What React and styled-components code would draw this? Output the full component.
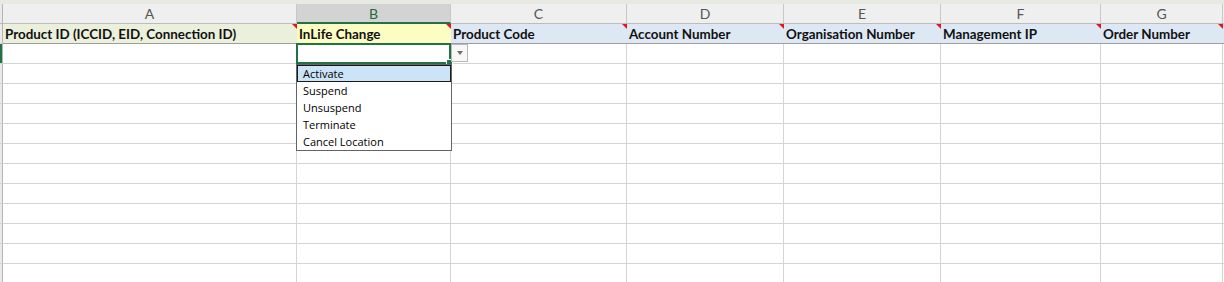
import React from 'react'
import styled, {createGlobalStyle, css} from 'styled-components'

const GlobalStyle = createGlobalStyle`
body {
	margin:0;
	background:#ffffff;
	font-family:Lato, "Liberation Sans", sans-serif;
}
`

const COLS = [
	{letter: 'A', width: 294, title: 'Product ID (ICCID, EID, Connection ID)', tone: 'green'},
	{letter: 'B', width: 154, title: 'InLife Change', tone: 'yellow', active: true},
	{letter: 'C', width: 176, title: 'Product Code', tone: 'blue'},
	{letter: 'D', width: 157, title: 'Account Number', tone: 'blue'},
	{letter: 'E', width: 157, title: 'Organisation Number', tone: 'blue'},
	{letter: 'F', width: 160, title: 'Management IP', tone: 'blue'},
	{letter: 'G', width: 122, title: 'Order Number', tone: 'blue'},
	{letter: '', width: 120, title: '', tone: 'blue'},
]

const TONES = {
	green: '#ebf0dd',
	yellow: '#fdfcc3',
	blue: '#dde8f4',
}

const OPTIONS = ['Activate', 'Suspend', 'Unsuspend', 'Terminate', 'Cancel Location']

const Sheet = styled.div`
position:relative;
width:1224px;
height:282px;
overflow:hidden;
background:#ffffff;
`

const TopStrip = styled.div`
height:4px;
background:#e7eae0;
`

const Row = styled.div`
display:flex;
height:20px;
`

const RowHead = styled.div`
width:2px;
flex:none;
background:${p => p.$active ? '#217346' : '#e9e9e9'};
border-right:1px solid #b5b5b5;
border-bottom:1px solid ${p => p.$head ? '#bcbcbc' : '#d4d4d4'};
box-sizing:content-box;
height:19px;
`

const ColHead = styled.div`
flex:none;
width:${p => p.$w - 1}px;
height:${p => p.$active ? 18 : 19}px;
border-right:1px solid #c8c8c8;
border-bottom:${p => p.$active ? '2px solid #217346' : '1px solid #bcbcbc'};
background:${p => p.$active ? '#d3d3d3' : '#efefef'};
color:${p => p.$active ? '#1d6b3f' : '#555555'};
font-size:14px;
line-height:19px;
text-align:center;
`

const TitleCell = styled.div`
position:relative;
flex:none;
width:${p => p.$w - 1}px;
height:19px;
border-right:1px solid #d4d4d4;
border-bottom:1px solid #9d9d9d;
background:${p => TONES[p.$tone]};
color:#111111;
font-weight:700;
font-size:13.4px;
line-height:20px;
padding-left:2px;
box-sizing:content-box;
margin-right:-2px;
white-space:nowrap;
overflow:hidden;
&::after {
	content:'';
	position:absolute;
	top:0;
	right:0;
	border-top:6px solid #e8141b;
	border-left:6px solid transparent;
}
`

const Cell = styled.div`
flex:none;
width:${p => p.$w - 1}px;
height:19px;
border-right:1px solid #d4d4d4;
border-bottom:1px solid #d4d4d4;
`

const Selection = styled.div`
position:absolute;
left:296px;
top:43px;
width:151px;
height:17px;
border:2px solid #217346;
`

const FillHandle = styled.div`
position:absolute;
right:-4px;
bottom:-4px;
width:5px;
height:5px;
background:#217346;
border:1px solid #ffffff;
`

const ArrowButton = styled.div`
position:absolute;
left:451px;
top:44px;
width:15px;
height:16px;
border:1px solid #b8b8b8;
background:#f7f7f7;
display:flex;
align-items:center;
justify-content:center;
&::after {
	content:'';
	border-top:4px solid #6d6d6d;
	border-left:3.5px solid transparent;
	border-right:3.5px solid transparent;
}
`

const List = styled.div`
position:absolute;
left:296px;
top:64px;
width:154px;
border:1px solid #646464;
background:#ffffff;
`

const Option = styled.div`
height:17px;
line-height:18px;
padding-left:6px;
font-family:"Open Sans", "Noto Sans", sans-serif;
font-size:11px;
color:#000000;
box-sizing:border-box;
${p => p.$on && css`
	background:#cce4f7;
	border:1px solid #1a1a1a;
	padding-left:5px;
	line-height:16px;
`}
`

export default function App () {
	const rows = Array.from({length: 12}, (_, i) => i)

	return (
		<Sheet>
			<GlobalStyle/>
			<TopStrip/>
			<Row>
				<RowHead $head/>
				{COLS.map((col, i) => <ColHead key={i} $w={col.width} $active={col.active}>{col.letter}</ColHead>)}
			</Row>
			<Row>
				<RowHead/>
				{COLS.map((col, i) => <TitleCell key={i} $w={col.width} $tone={col.tone}>{col.title}</TitleCell>)}
			</Row>
			{rows.map(r =>
				<Row key={r}>
					<RowHead $active={r === 0}/>
					{COLS.map((col, i) => <Cell key={i} $w={col.width}/>)}
				</Row>
			)}
			<Selection>
				<FillHandle/>
			</Selection>
			<ArrowButton/>
			<List>
				{OPTIONS.map((opt, i) => <Option key={opt} $on={i === 0}>{opt}</Option>)}
			</List>
		</Sheet>
	)
}
